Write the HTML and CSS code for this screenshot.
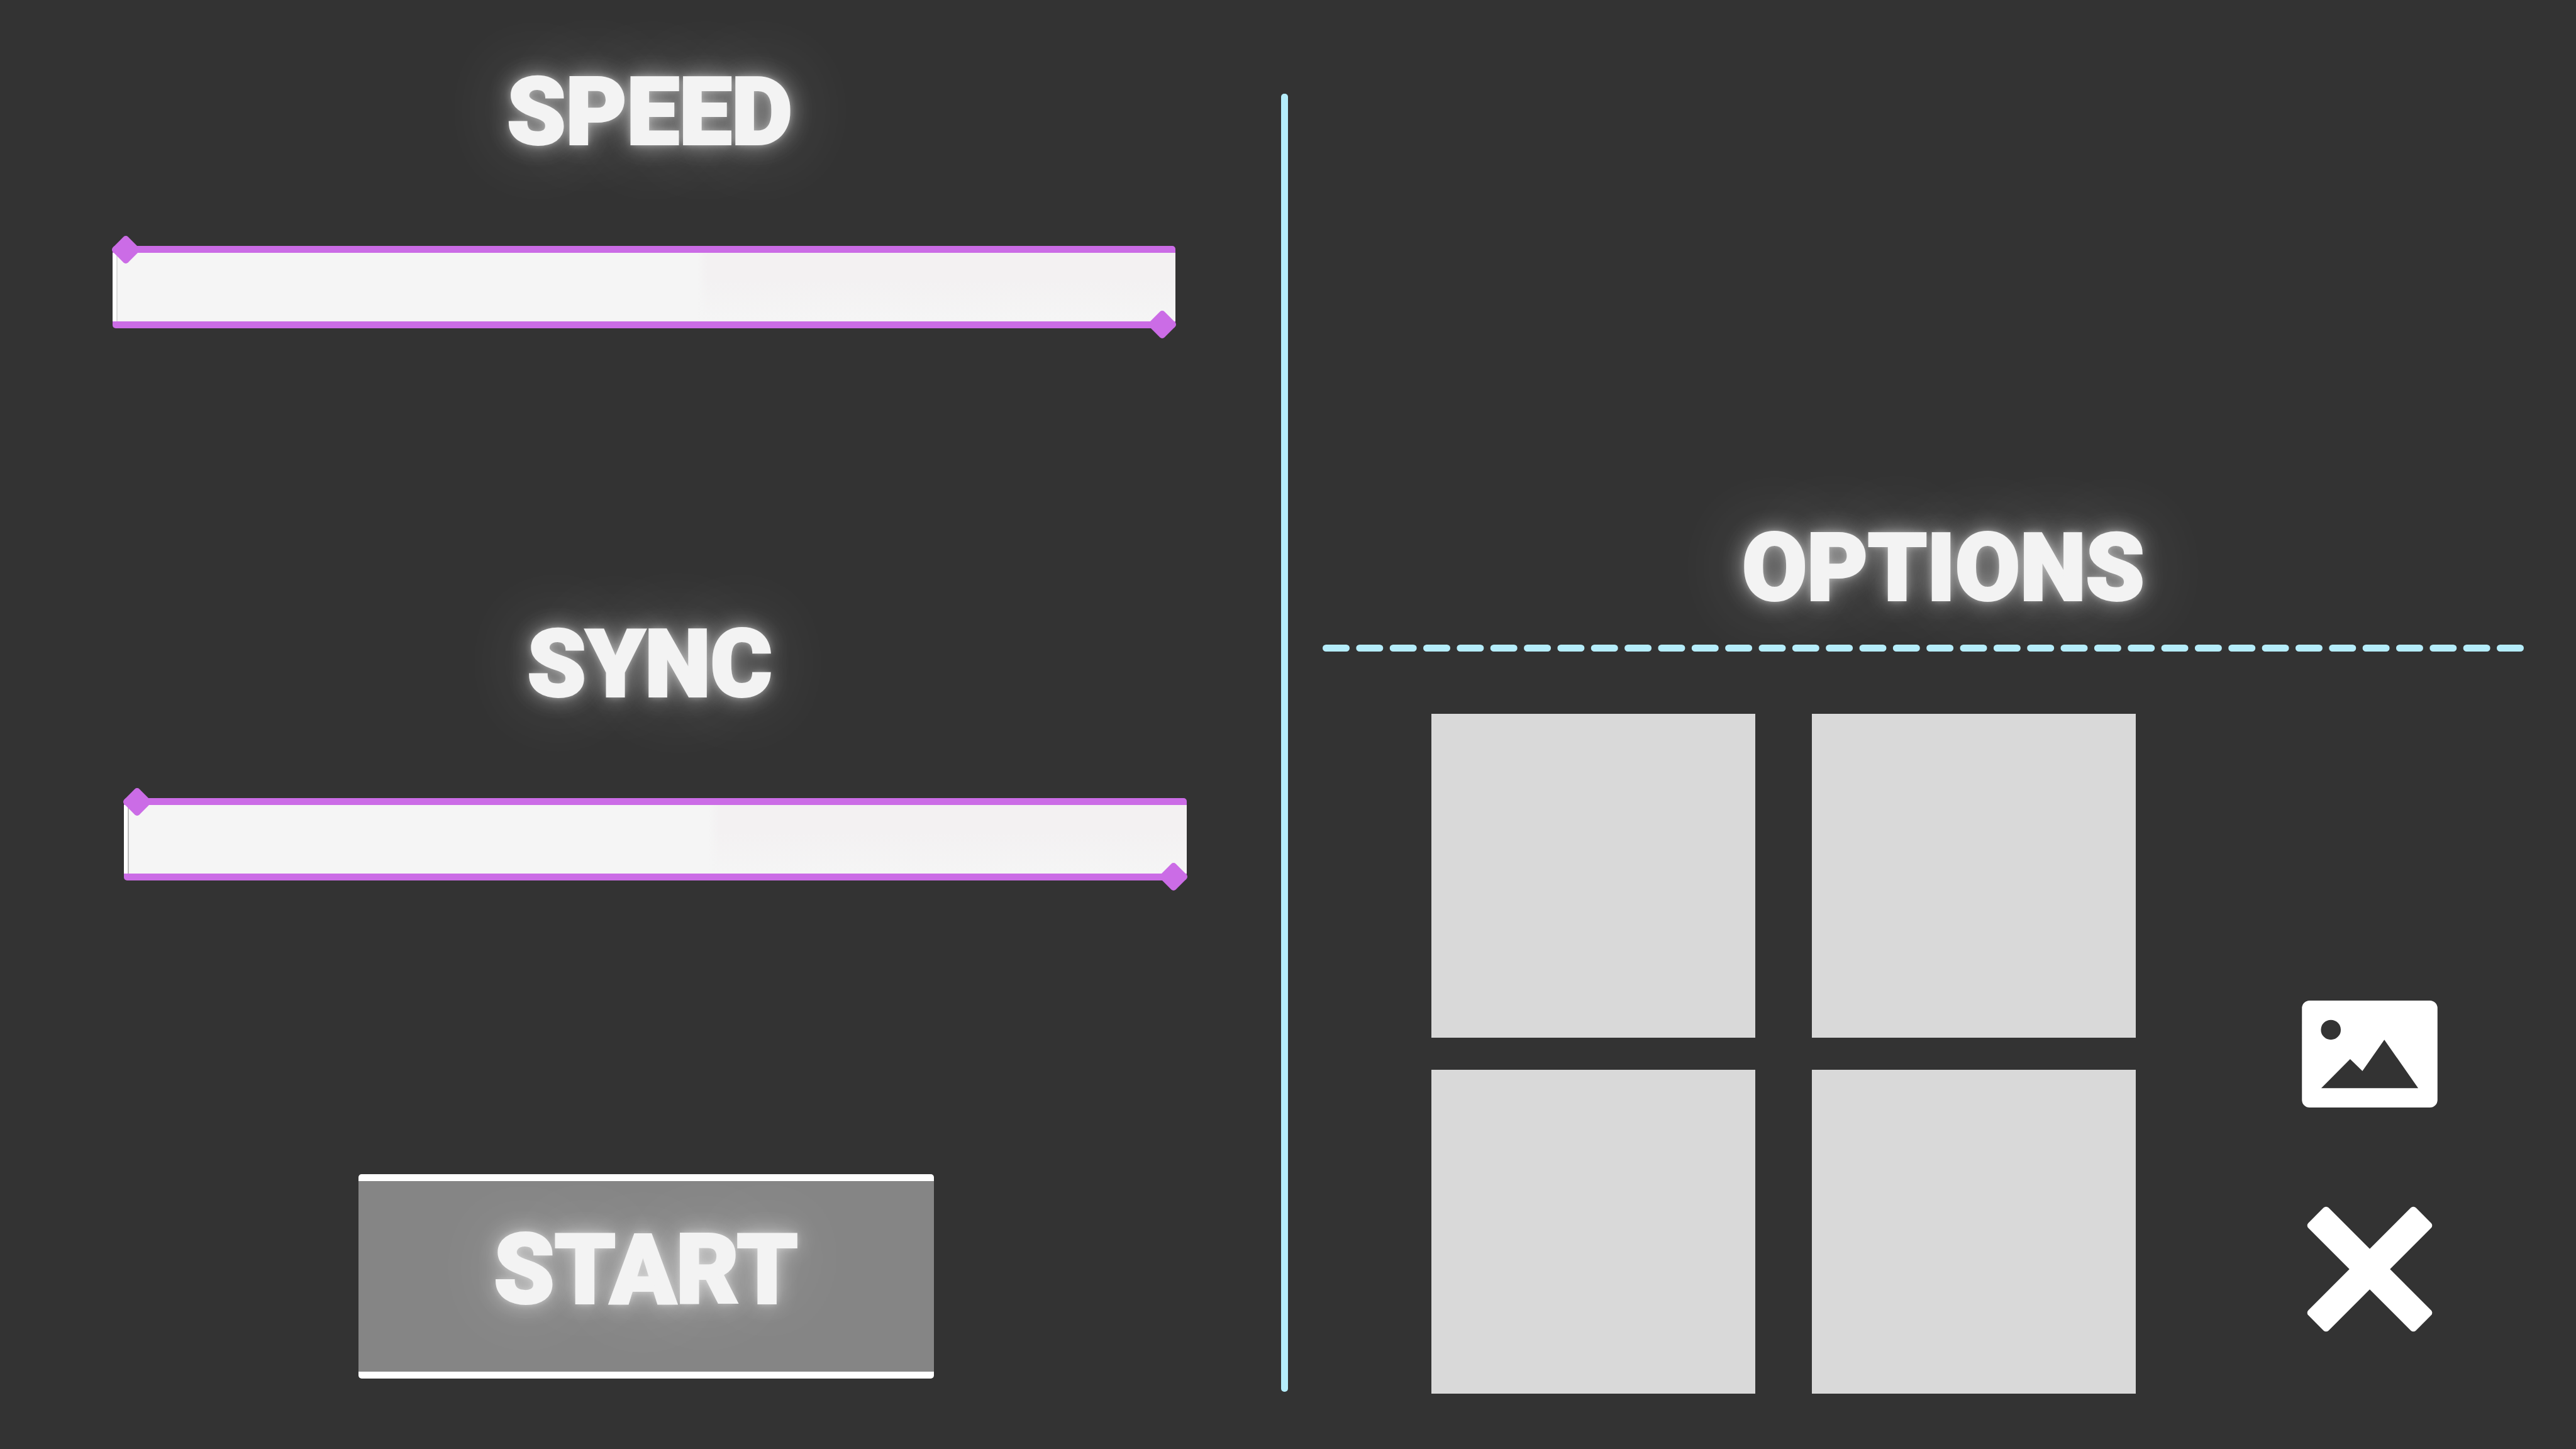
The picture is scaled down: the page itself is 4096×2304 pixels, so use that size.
FILE: index.html
```html
<!DOCTYPE html>
<html lang="en">
<head>
<meta charset="utf-8">
<title>Speed and sync</title>
<link rel="stylesheet" href="styles.css">
</head>
<body>
<main class="screen">
  <section class="controls">
    <div class="field">
      <label class="title" for="speed">SPEED</label>
      <div class="slider"><input class="range" id="speed" type="range" min="0" max="100" value="0"></div>
    </div>
    <div class="field field-end">
      <label class="title" for="sync">SYNC</label>
      <div class="slider"><input class="range range-dark" id="sync" type="range" min="0" max="100" value="0"></div>
    </div>
    <button class="title start" type="button">START</button>
  </section>
  <div class="divider"></div>
  <section class="options">
    <h2 class="title options-title">OPTIONS</h2>
    <svg class="dashes" width="100%" height="11" viewBox="0 0 1910 11" preserveAspectRatio="none" aria-hidden="true">
      <path d="M5.500 5.500H1904.500" pathLength="178" stroke="#b5edfb" stroke-width="11" stroke-linecap="round" stroke-dasharray="3 2" fill="none"/>
    </svg>
    <div class="picker">
      <div class="tiles">
        <button class="tile" type="button" aria-label="Slot 1"></button>
        <button class="tile" type="button" aria-label="Slot 2"></button>
        <button class="tile" type="button" aria-label="Slot 3"></button>
        <button class="tile" type="button" aria-label="Slot 4"></button>
      </div>
      <div class="actions">
        <button class="action" type="button" aria-label="Image">
          <svg width="216" height="170" viewBox="0 0 232 183" aria-hidden="true">
            <path fill="#fff" fill-rule="evenodd" d="M13 0H219A13 13 0 0 1 232 13V170A13 13 0 0 1 219 183H13A13 13 0 0 1 0 170V13A13 13 0 0 1 13 0ZM49.500 33A17 17 0 1 0 49.500 67A17 17 0 1 0 49.500 33ZM33 150H199L141 67L103.500 120.500L82.500 100Z"/>
          </svg>
        </button>
        <button class="action" type="button" aria-label="Close">
          <svg width="200" height="202" viewBox="0 0 215 217" aria-hidden="true">
            <g fill="#fff" transform="translate(107.500 108.500)">
              <rect x="-130" y="-24.500" width="260" height="49" rx="6" transform="rotate(45)"/>
              <rect x="-130" y="-24.500" width="260" height="49" rx="6" transform="rotate(-45)"/>
            </g>
          </svg>
        </button>
      </div>
    </div>
  </section>
</main>
</body>
</html>
```
FILE: styles.css
```css
* {
  box-sizing: border-box;
}

body {
  margin: 0;
  background: #333;
}

button {
  margin: 0;
  padding: 0;
  border: 0;
  background: none;
}

.screen {
  display: grid;
  grid-template-columns: minmax(0, 2037fr) 11px minmax(0, 2048fr);
  min-height: 100vh;
}

.title {
  margin: 0;
  font-family: Roboto, sans-serif;
  font-size: 149px;
  font-weight: 900;
  line-height: 140px;
  text-align: center;
  color: #f3f3f3;
  -webkit-text-stroke: 4px #f3f3f3;
  text-shadow: 0 0 12px rgba(255, 255, 255, 0.5), 0 0 36px rgba(255, 255, 255, 0.6), 0 0 120px rgba(255, 255, 255, 0.3);
}

.controls {
  display: flex;
  flex-direction: column;
  padding: 108px 150px 0 179px;
}

.field {
  display: flex;
  flex-direction: column;
  gap: 143px;
  margin-bottom: 464px;
}

.field-end {
  align-items: flex-end;
  margin-bottom: 467px;
}

.field .title {
  width: 100%;
}

.slider {
  position: relative;
  width: calc(100% - 18px);
}

.slider::before,
.slider::after {
  content: "";
  position: absolute;
  width: 34px;
  height: 34px;
  border-radius: 5px;
  background: #cb6ce6;
  transform: rotate(45deg);
}

.slider::before {
  left: 4px;
  top: -11px;
}

.slider::after {
  right: 4px;
  bottom: -11px;
}

.range {
  display: block;
  appearance: none;
  width: 100%;
  height: 131px;
  margin: 0;
  border: solid #cb6ce6;
  border-width: 11px 0;
  border-radius: 5px;
  background:
    linear-gradient(90deg, #f5f5f5 55%, transparent 56%),
    linear-gradient(#f3f1f2 40%, #f5f5f5);
}

.range::-webkit-slider-thumb {
  appearance: none;
  width: 8px;
  height: 109px;
  border-right: 2px solid #dcdcdc;
  background: #fff;
}

.range-dark::-webkit-slider-thumb {
  border-right-color: #bbb;
}

.start {
  align-self: center;
  width: 915px;
  height: 325px;
  margin-right: 12px;
  padding-bottom: 20px;
  border: solid #fff;
  border-width: 11px 0;
  border-radius: 5px;
  background: #858585;
  font-size: 154px;
}

.divider {
  margin: 149px 0 91px;
  border-radius: 5px;
  background: #b5edfb;
}

.options {
  padding: 833px 83px 0 55px;
}

.options-title {
  padding-left: 64px;
}

.dashes {
  display: block;
  margin-top: 52px;
}

.picker {
  display: flex;
  justify-content: space-between;
  align-items: flex-end;
  margin: 99px 137px 88px 173px;
}

.tiles {
  display: grid;
  grid-template-columns: 515px 515px;
  grid-auto-rows: 515px;
  gap: 51px 90px;
}

.tile {
  background: #d9d9d9;
}

.action {
  display: block;
}

.action svg {
  display: block;
}

.actions {
  display: flex;
  flex-direction: column;
  align-items: center;
  gap: 156px;
  padding-bottom: 97px;
}
```
